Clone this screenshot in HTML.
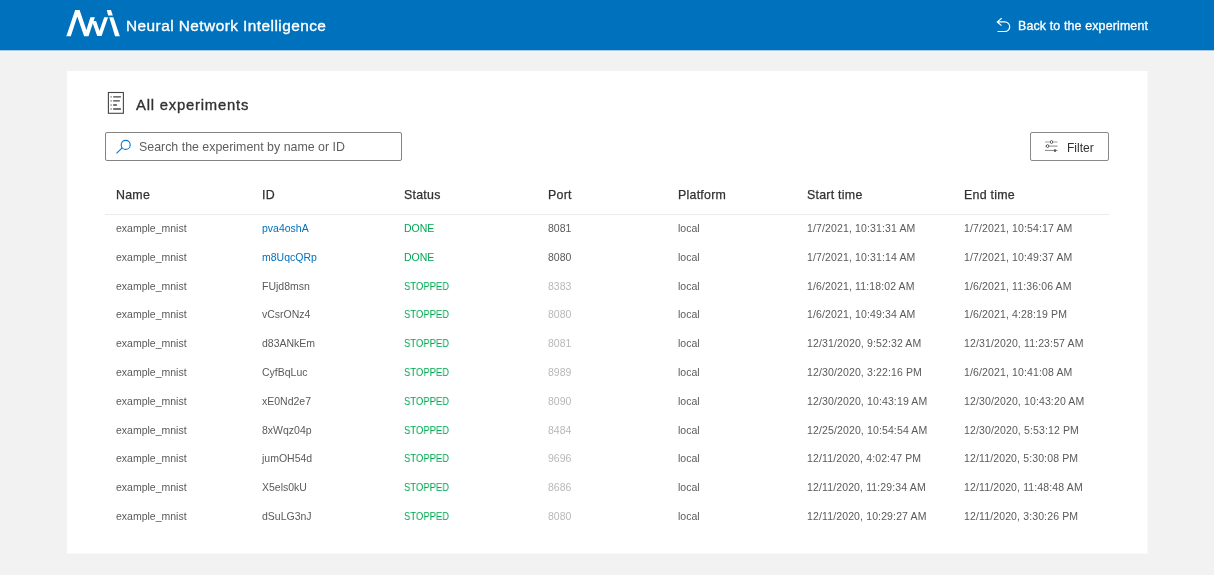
<!DOCTYPE html>
<html><head><meta charset="utf-8">
<style>
html,body{margin:0;padding:0;}
body{width:1214px;height:575px;overflow:hidden;background:#f2f2f2;position:relative;font-family:"Liberation Sans",sans-serif;}
.hdr{position:absolute;left:0;top:0;width:1214px;height:50px;background:#0071bc;}
.hline{position:absolute;left:0;top:50px;width:1214px;height:1px;background:#a9c9e3;}
.hline2{position:absolute;left:0;top:51px;width:1214px;height:1px;background:#f8f6f3;}
.t{position:absolute;will-change:transform;white-space:nowrap;line-height:20px;}
#title{left:125.5px;top:16px;font-size:15.4px;letter-spacing:0.45px;color:#fff;-webkit-text-stroke:0.35px #fff;}
#back{left:1017.5px;top:16px;font-size:12.4px;letter-spacing:0.15px;color:#fff;-webkit-text-stroke:0.3px #fff;}
#card{position:absolute;left:67px;top:71px;width:1080px;height:482px;background:#fff;border-right:1px solid #f9f9f9;border-bottom:1px solid #f9f9f9;}
#allexp{left:136px;top:95px;font-size:14.8px;letter-spacing:0.8px;color:#323130;-webkit-text-stroke:0.35px #323130;}
#search{position:absolute;left:105px;top:132px;width:295px;height:27px;border:1px solid #858381;border-radius:2px;}
#ph{left:138.5px;top:137px;font-size:12.4px;color:#605e5c;}
#filter{position:absolute;left:1030px;top:132px;width:77px;height:27px;border:1px solid #8a8886;border-radius:2px;}
#ftxt{left:1067px;top:138px;font-size:12px;color:#323130;}
.h{position:absolute;will-change:transform;top:185px;white-space:nowrap;line-height:20px;font-size:12.4px;letter-spacing:0.25px;color:#323130;-webkit-text-stroke:0.25px #323130;}
#sep{position:absolute;left:105px;top:214px;width:1004px;height:1px;background:#edebe9;}
.row{position:absolute;left:0;width:1214px;height:20px;}
.c{position:absolute;will-change:transform;top:0;white-space:nowrap;line-height:20px;font-size:10.5px;color:#5c5a58;}
.link{color:#0071bc;}
.ok{color:#00a852;}
.sq{transform:scaleX(0.9);transform-origin:0 0;}
.dt{letter-spacing:0.13px;}
.dim{color:#bab8b6;}
</style></head><body>
<div class="hdr"></div>
<div class="hline"></div><div class="hline2"></div>
<svg id="logo" style="position:absolute;left:0;top:0" width="130" height="50" viewBox="0 0 130 50"><g fill="#fff">
<polygon points="66.3,36.2 75.2,10.1 79.6,10.1 86.4,29.9 90.4,17.3 94.9,17.3 88.5,36.2 84.1,36.2 77.3,16.6 70.8,36.2"/>
<polygon points="91.95,21.1 96.1,21.1 99.5,30.7 104.2,17.3 108.1,17.3 101.6,36.1 97.2,36.1"/>
<polygon points="109.2,17.3 113.4,17.3 119.8,36.2 115.1,36.2"/>
<polygon points="106.8,10.1 111,10.1 112.8,15.6 108.1,15.6"/>
</g></svg>
<div class="t" id="title">Neural Network Intelligence</div>
<svg style="position:absolute;left:990px;top:12px" width="24" height="26" viewBox="0 0 24 26"><path d="M11.7,6.3 L7.3,9.9 L11.5,13.6 M7.5,9.9 H14.9 A4.8,4.8 0 0 1 14.9,19.5 H7.5" fill="none" stroke="#fff" stroke-width="1.2"/></svg>
<div class="t" id="back">Back to the experiment</div>
<div id="card"></div>
<svg style="position:absolute;left:100px;top:85px" width="35" height="35" viewBox="0 0 35 35"><g transform="translate(-100,-85)">
<rect x="108.4" y="92.5" width="15" height="20.8" fill="none" stroke="#484644" stroke-width="1.1"/>
<g fill="#b3b0ad"><rect x="110.2" y="96" width="1.8" height="1.7"/><rect x="110.2" y="100" width="1.8" height="1.7"/><rect x="110.2" y="104.2" width="1.8" height="1.7"/><rect x="110.2" y="108.2" width="1.8" height="1.7"/></g>
<g stroke="#484644" stroke-width="1.3"><path d="M113.2,96.8H120.9M113.2,100.8H119.8M113.2,105H116.9M113.2,109H120.9"/></g>
</g></svg>
<div class="t" id="allexp">All experiments</div>
<div id="search"></div>
<svg style="position:absolute;left:104px;top:130px" width="40" height="30" viewBox="0 0 40 30"><g transform="translate(-104,-130)" fill="none" stroke="#0078d4" stroke-width="1.1">
<circle cx="125.7" cy="144.9" r="4.5"/><path d="M116.5,153.4 L122.4,147.6"/></g></svg>
<div class="t" id="ph">Search the experiment by name or ID</div>
<div id="filter"></div>
<svg style="position:absolute;left:1040px;top:136px" width="24" height="20" viewBox="0 0 24 20"><g transform="translate(-1040,-136)">
<g stroke="#a19f9d" stroke-width="1"><path d="M1045,142H1050M1053,142H1057.6"/></g>
<ellipse cx="1051.5" cy="142" rx="1.2" ry="1.5" fill="#fff" stroke="#605e5c" stroke-width="1"/>
<g stroke="#8a8886" stroke-width="1"><path d="M1045.2,146.1H1057.6"/></g>
<ellipse cx="1047.6" cy="146.1" rx="1.2" ry="1.5" fill="#fff" stroke="#605e5c" stroke-width="1"/>
<g stroke="#8a8886" stroke-width="1"><path d="M1045,150.4H1057.6"/></g>
<ellipse cx="1055" cy="150.4" rx="1.2" ry="1.5" fill="#605e5c"/>
</g></svg>
<div class="t" id="ftxt">Filter</div>
<span class="h" style="left:116px">Name</span>
<span class="h" style="left:262px">ID</span>
<span class="h" style="left:403.8px">Status</span>
<span class="h" style="left:548px">Port</span>
<span class="h" style="left:677.5px">Platform</span>
<span class="h" style="left:807.2px">Start time</span>
<span class="h" style="left:964px">End time</span>
<div id="sep"></div>
<div class="row" style="top:218.0px">
<span class="c" style="left:116px">example_mnist</span>
<span class="c link" style="left:262px">pva4oshA</span>
<span class="c ok" style="left:403.8px">DONE</span>
<span class="c " style="left:548px">8081</span>
<span class="c" style="left:677.5px">local</span>
<span class="c dt" style="left:807.2px">1/7/2021, 10:31:31 AM</span>
<span class="c dt" style="left:964px">1/7/2021, 10:54:17 AM</span>
</div>
<div class="row" style="top:246.8px">
<span class="c" style="left:116px">example_mnist</span>
<span class="c link" style="left:262px">m8UqcQRp</span>
<span class="c ok" style="left:403.8px">DONE</span>
<span class="c " style="left:548px">8080</span>
<span class="c" style="left:677.5px">local</span>
<span class="c dt" style="left:807.2px">1/7/2021, 10:31:14 AM</span>
<span class="c dt" style="left:964px">1/7/2021, 10:49:37 AM</span>
</div>
<div class="row" style="top:275.6px">
<span class="c" style="left:116px">example_mnist</span>
<span class="c " style="left:262px">FUjd8msn</span>
<span class="c ok sq" style="left:403.8px">STOPPED</span>
<span class="c dim" style="left:548px">8383</span>
<span class="c" style="left:677.5px">local</span>
<span class="c dt" style="left:807.2px">1/6/2021, 11:18:02 AM</span>
<span class="c dt" style="left:964px">1/6/2021, 11:36:06 AM</span>
</div>
<div class="row" style="top:304.4px">
<span class="c" style="left:116px">example_mnist</span>
<span class="c " style="left:262px">vCsrONz4</span>
<span class="c ok sq" style="left:403.8px">STOPPED</span>
<span class="c dim" style="left:548px">8080</span>
<span class="c" style="left:677.5px">local</span>
<span class="c dt" style="left:807.2px">1/6/2021, 10:49:34 AM</span>
<span class="c dt" style="left:964px">1/6/2021, 4:28:19 PM</span>
</div>
<div class="row" style="top:333.2px">
<span class="c" style="left:116px">example_mnist</span>
<span class="c " style="left:262px">d83ANkEm</span>
<span class="c ok sq" style="left:403.8px">STOPPED</span>
<span class="c dim" style="left:548px">8081</span>
<span class="c" style="left:677.5px">local</span>
<span class="c dt" style="left:807.2px">12/31/2020, 9:52:32 AM</span>
<span class="c dt" style="left:964px">12/31/2020, 11:23:57 AM</span>
</div>
<div class="row" style="top:362.0px">
<span class="c" style="left:116px">example_mnist</span>
<span class="c " style="left:262px">CyfBqLuc</span>
<span class="c ok sq" style="left:403.8px">STOPPED</span>
<span class="c dim" style="left:548px">8989</span>
<span class="c" style="left:677.5px">local</span>
<span class="c dt" style="left:807.2px">12/30/2020, 3:22:16 PM</span>
<span class="c dt" style="left:964px">1/6/2021, 10:41:08 AM</span>
</div>
<div class="row" style="top:390.8px">
<span class="c" style="left:116px">example_mnist</span>
<span class="c " style="left:262px">xE0Nd2e7</span>
<span class="c ok sq" style="left:403.8px">STOPPED</span>
<span class="c dim" style="left:548px">8090</span>
<span class="c" style="left:677.5px">local</span>
<span class="c dt" style="left:807.2px">12/30/2020, 10:43:19 AM</span>
<span class="c dt" style="left:964px">12/30/2020, 10:43:20 AM</span>
</div>
<div class="row" style="top:419.6px">
<span class="c" style="left:116px">example_mnist</span>
<span class="c " style="left:262px">8xWqz04p</span>
<span class="c ok sq" style="left:403.8px">STOPPED</span>
<span class="c dim" style="left:548px">8484</span>
<span class="c" style="left:677.5px">local</span>
<span class="c dt" style="left:807.2px">12/25/2020, 10:54:54 AM</span>
<span class="c dt" style="left:964px">12/30/2020, 5:53:12 PM</span>
</div>
<div class="row" style="top:448.4px">
<span class="c" style="left:116px">example_mnist</span>
<span class="c " style="left:262px">jumOH54d</span>
<span class="c ok sq" style="left:403.8px">STOPPED</span>
<span class="c dim" style="left:548px">9696</span>
<span class="c" style="left:677.5px">local</span>
<span class="c dt" style="left:807.2px">12/11/2020, 4:02:47 PM</span>
<span class="c dt" style="left:964px">12/11/2020, 5:30:08 PM</span>
</div>
<div class="row" style="top:477.2px">
<span class="c" style="left:116px">example_mnist</span>
<span class="c " style="left:262px">X5els0kU</span>
<span class="c ok sq" style="left:403.8px">STOPPED</span>
<span class="c dim" style="left:548px">8686</span>
<span class="c" style="left:677.5px">local</span>
<span class="c dt" style="left:807.2px">12/11/2020, 11:29:34 AM</span>
<span class="c dt" style="left:964px">12/11/2020, 11:48:48 AM</span>
</div>
<div class="row" style="top:506.0px">
<span class="c" style="left:116px">example_mnist</span>
<span class="c " style="left:262px">dSuLG3nJ</span>
<span class="c ok sq" style="left:403.8px">STOPPED</span>
<span class="c dim" style="left:548px">8080</span>
<span class="c" style="left:677.5px">local</span>
<span class="c dt" style="left:807.2px">12/11/2020, 10:29:27 AM</span>
<span class="c dt" style="left:964px">12/11/2020, 3:30:26 PM</span>
</div>
</body></html>
